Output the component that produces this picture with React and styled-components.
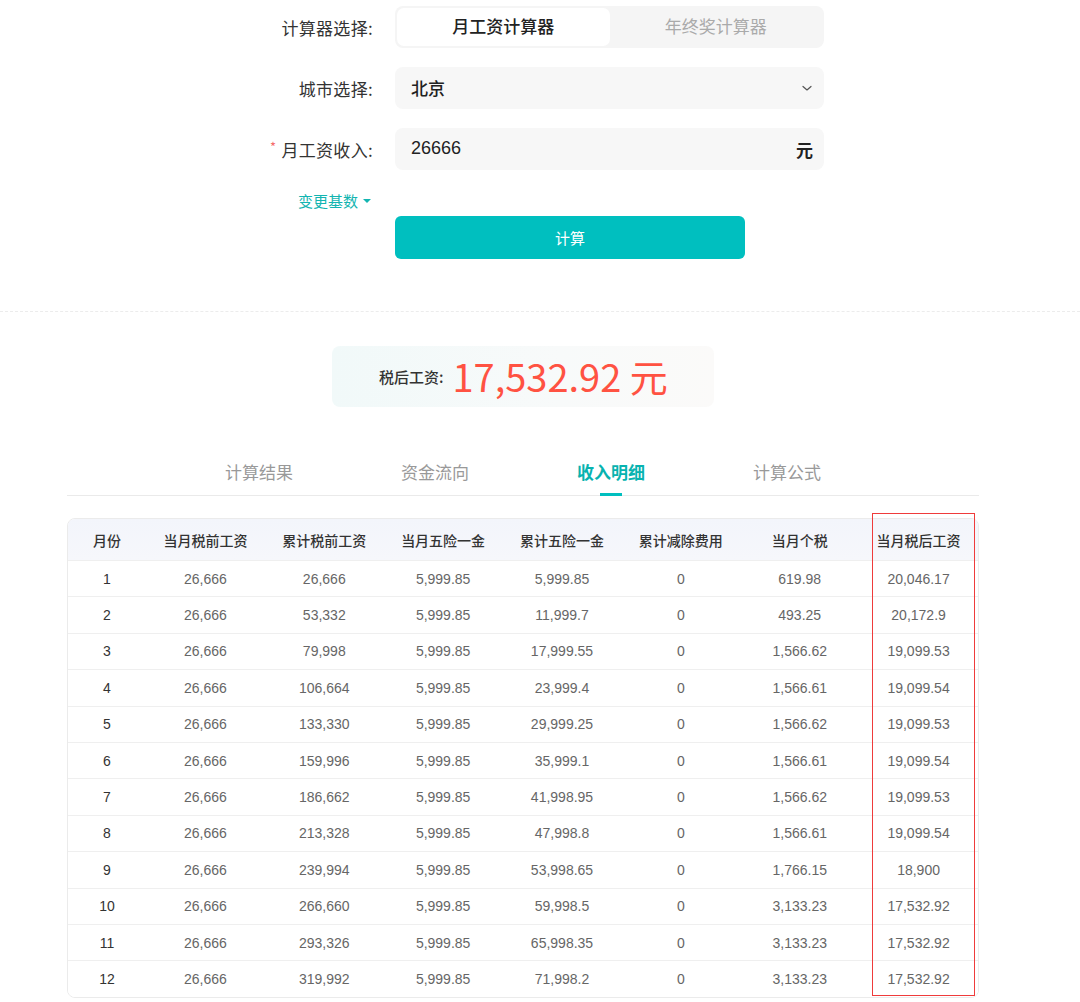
import React from 'react';
import styled, { createGlobalStyle } from 'styled-components';

const GlobalStyle = createGlobalStyle`
  body {
    margin: 0;
    background: #fff;
    font-family: 'Noto Sans CJK SC', 'Noto Sans', sans-serif;
    color: #333;
  }
`

const Page = styled.div`
  width: 1080px;
  padding-top: 6px;
`

const Form = styled.div`
  display: flex;
  flex-direction: column;
  gap: 19px;
`

const FormRow = styled.div`
  display: flex;
  align-items: center;
`

const Label = styled.div`
  width: 395px;
  box-sizing: border-box;
  padding-right: 22px;
  text-align: right;
  font-size: 17px;
  color: #333;
  letter-spacing: 0.3px;
`

const Star = styled.span`
  color: #f56c6c;
  margin-right: 5px;
  font-size: 13px;
  vertical-align: top;
`

const Segmented = styled.div`
  width: 429px;
  height: 42px;
  box-sizing: border-box;
  padding: 2px;
  background: #f5f5f5;
  border-radius: 8px;
  display: flex;
`

const Segment = styled.div`
  flex: 1;
  display: flex;
  align-items: center;
  justify-content: center;
  border-radius: 7px;
  padding-bottom: 3px;
  font-size: 17px;
  font-weight: ${p => (p.active ? 500 : 400)};
  color: ${p => (p.active ? '#222' : '#aaa')};
  background: ${p => (p.active ? '#fff' : 'transparent')};
`

const Field = styled.div`
  width: 429px;
  height: 42px;
  box-sizing: border-box;
  padding: 0 11px 0 16px;
  background: #f7f7f7;
  border-radius: 8px;
  display: flex;
  align-items: center;
  justify-content: space-between;
  font-size: 17px;
  color: #222;
`

const Value = styled.span`
  font-family: ${p => (p.num ? "'Liberation Sans', sans-serif" : 'inherit')};
  font-weight: ${p => (p.num ? 400 : 500)};
  font-size: ${p => (p.num ? '18px' : '17px')};
  margin-bottom: 2px;
`

const Unit = styled.span`
  font-weight: 600;
  font-size: 17px;
  color: #222;
`

const BaseLink = styled.div`
  margin-top: 20px;
  width: 395px;
  padding-right: 24px;
  box-sizing: border-box;
  display: flex;
  justify-content: flex-end;
  align-items: center;
  gap: 5px;
  color: #13b5b1;
  font-size: 15px;
`

const Caret = styled.span`
  width: 0;
  height: 0;
  border-left: 4px solid transparent;
  border-right: 4px solid transparent;
  border-top: 4px solid #13b5b1;
`

const ButtonRow = styled.div`
  margin-top: 5px;
  padding-left: 395px;
`

const CalcButton = styled.button`
  width: 350px;
  height: 43px;
  border: none;
  border-radius: 6px;
  background: #00bfbf;
  color: #fff;
  font-family: inherit;
  font-size: 15px;
  cursor: pointer;
`

const Divider = styled.div`
  margin-top: 52px;
  border-top: 1px dashed #ececec;
`

const ResultWrap = styled.div`
  margin-top: 34px;
  padding-left: 332px;
`

const ResultBox = styled.div`
  width: 382px;
  height: 61px;
  border-radius: 8px;
  background: linear-gradient(90deg, #f1f9f9 0%, #f8fafa 60%, #fbfaf9 100%);
  display: flex;
  align-items: center;
  padding-left: 47px;
  box-sizing: border-box;
  gap: 9px;
`

const ResultLabel = styled.span`
  font-size: 15px;
  font-weight: 500;
  color: #333;
`

const ResultValue = styled.span`
  font-size: 38px;
  color: #ff5242;
  font-weight: 400;
  letter-spacing: 0;
  margin-bottom: 2px;
`

const Tabs = styled.div`
  margin: 47px 101px 0 67px;
  border-bottom: 1px solid #eaeaea;
  display: flex;
  padding-left: 104px;
`

const Tab = styled.div`
  width: 176px;
  height: 41px;
  position: relative;
  display: flex;
  justify-content: center;
  align-items: flex-start;
  padding-top: 5px;
  box-sizing: border-box;
  font-size: 17px;
  color: ${p => (p.active ? '#08b3b0' : '#999')};
  font-weight: ${p => (p.active ? 600 : 400)};
  &::after {
    content: '';
    display: ${p => (p.active ? 'block' : 'none')};
    position: absolute;
    bottom: -1px;
    left: 77px;
    width: 22px;
    height: 3px;
    background: #00bfbf;
  }
`

const TableWrap = styled.div`
  margin: 22px 0 0 67px;
  width: 912px;
  position: relative;
`

const Table = styled.div`
  border: 1px solid #ebebeb;
  border-radius: 8px;
  overflow: hidden;
`

const Row = styled.div`
  display: grid;
  grid-template-columns: 78px repeat(7, 1fr);
  height: ${p => (p.head ? '41px' : '36.4px')};
  align-items: center;
  background: ${p => (p.head ? 'linear-gradient(180deg, #f3f5fb 0%, #f6f7fb 100%)' : '#fff')};
  border-top: ${p => (p.first ? 'none' : '1px solid #efefef')};
  box-sizing: border-box;
`

const HeadCell = styled.div`
  text-align: center;
  font-size: 14px;
  font-weight: 500;
  color: #333;
`

const Cell = styled.div`
  text-align: center;
  font-family: 'Liberation Sans', 'Noto Sans', sans-serif;
  font-size: 14px;
  color: ${p => (p.dark ? '#333' : '#666')};
`

const Highlight = styled.div`
  position: absolute;
  top: -5px;
  bottom: 2px;
  left: 805px;
  width: 103px;
  border: 1px solid #ef3b3b;
  box-sizing: border-box;
  pointer-events: none;
`

const headers = ['月份', '当月税前工资', '累计税前工资', '当月五险一金', '累计五险一金', '累计减除费用', '当月个税', '当月税后工资']

const rows = [
  ['1', '26,666', '26,666', '5,999.85', '5,999.85', '0', '619.98', '20,046.17'],
  ['2', '26,666', '53,332', '5,999.85', '11,999.7', '0', '493.25', '20,172.9'],
  ['3', '26,666', '79,998', '5,999.85', '17,999.55', '0', '1,566.62', '19,099.53'],
  ['4', '26,666', '106,664', '5,999.85', '23,999.4', '0', '1,566.61', '19,099.54'],
  ['5', '26,666', '133,330', '5,999.85', '29,999.25', '0', '1,566.62', '19,099.53'],
  ['6', '26,666', '159,996', '5,999.85', '35,999.1', '0', '1,566.61', '19,099.54'],
  ['7', '26,666', '186,662', '5,999.85', '41,998.95', '0', '1,566.62', '19,099.53'],
  ['8', '26,666', '213,328', '5,999.85', '47,998.8', '0', '1,566.61', '19,099.54'],
  ['9', '26,666', '239,994', '5,999.85', '53,998.65', '0', '1,766.15', '18,900'],
  ['10', '26,666', '266,660', '5,999.85', '59,998.5', '0', '3,133.23', '17,532.92'],
  ['11', '26,666', '293,326', '5,999.85', '65,998.35', '0', '3,133.23', '17,532.92'],
  ['12', '26,666', '319,992', '5,999.85', '71,998.2', '0', '3,133.23', '17,532.92'],
]

const tabs = ['计算结果', '资金流向', '收入明细', '计算公式']

function Chevron() {
  return (
    <svg width="12" height="12" viewBox="0 0 12 12" fill="none">
      <path d="M2 4.5 L6 8 L10 4.5" stroke="#555" strokeWidth="1.2" strokeLinecap="round" strokeLinejoin="round" />
    </svg>
  )
}

export default function App() {
  return (
    <Page>
      <GlobalStyle />
      <Form>
        <FormRow>
          <Label>计算器选择:</Label>
          <Segmented>
            <Segment active>月工资计算器</Segment>
            <Segment>年终奖计算器</Segment>
          </Segmented>
        </FormRow>
        <FormRow>
          <Label>城市选择:</Label>
          <Field>
            <Value>北京</Value>
            <Chevron />
          </Field>
        </FormRow>
        <FormRow>
          <Label><Star>*</Star>月工资收入:</Label>
          <Field>
            <Value num>26666</Value>
            <Unit>元</Unit>
          </Field>
        </FormRow>
      </Form>
      <BaseLink>变更基数<Caret /></BaseLink>
      <ButtonRow>
        <CalcButton>计算</CalcButton>
      </ButtonRow>
      <Divider />
      <ResultWrap>
        <ResultBox>
          <ResultLabel>税后工资:</ResultLabel>
          <ResultValue>17,532.92 元</ResultValue>
        </ResultBox>
      </ResultWrap>
      <Tabs>
        {tabs.map(t => (
          <Tab key={t} active={t === '收入明细'}>{t}</Tab>
        ))}
      </Tabs>
      <TableWrap>
        <Table>
          <Row head first>
            {headers.map(h => <HeadCell key={h}>{h}</HeadCell>)}
          </Row>
          {rows.map(r => (
            <Row key={r[0]}>
              {r.map((c, i) => <Cell key={i} dark={i === 0}>{c}</Cell>)}
            </Row>
          ))}
        </Table>
        <Highlight />
      </TableWrap>
    </Page>
  )
}
